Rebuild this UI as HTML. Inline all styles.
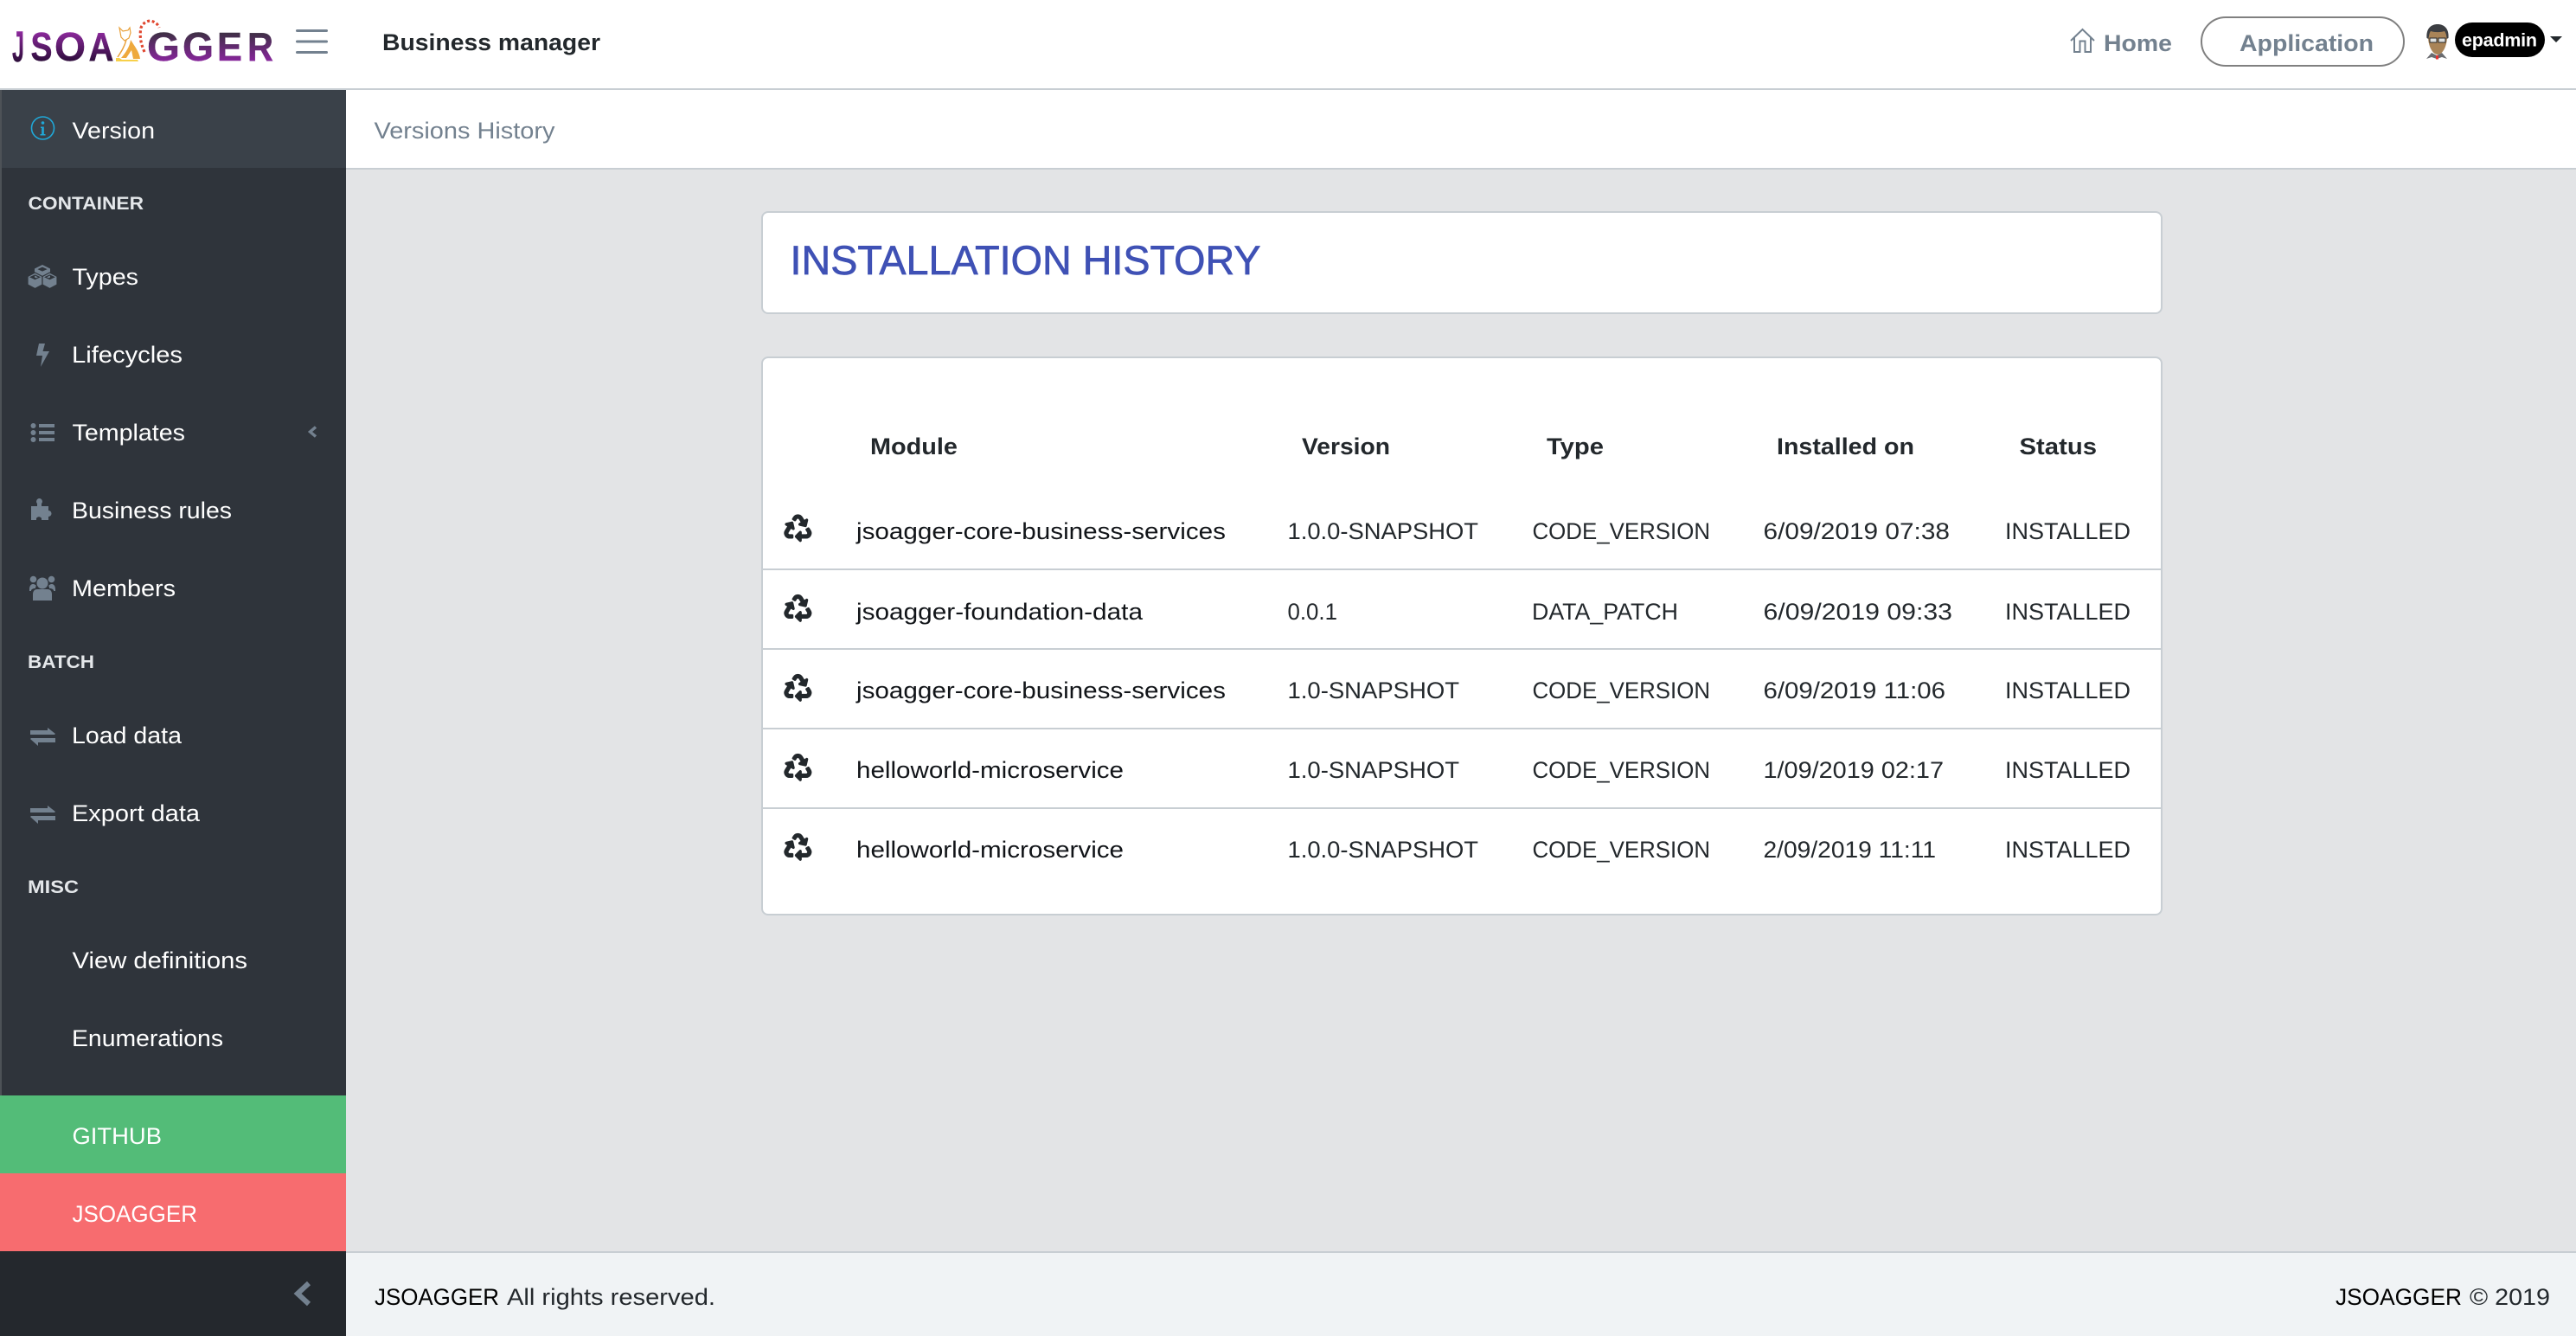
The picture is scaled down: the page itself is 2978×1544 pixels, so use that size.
<!DOCTYPE html>
<html lang="en">
<head>
<meta charset="utf-8">
<title>Business manager</title>
<style>
html,body{margin:0;padding:0;background:#e3e4e6;width:2978px;height:1544px;overflow:hidden}
svg{display:block}
text{font-family:"Liberation Sans",sans-serif;font-size:27px;white-space:pre}
.m{fill:#fff}
.s{fill:#e4e7ea;font-size:21px;font-weight:700}
.h{fill:#23282c;font-weight:700}
.t{fill:#23282c}
.b{fill:#111418}
.i{fill:#73818f}
.l{font-size:46px;font-weight:700;stroke-width:.4px}
</style>
</head>
<body>
<svg xmlns="http://www.w3.org/2000/svg" width="2978" height="1544" viewBox="0 0 2978 1544">
<defs>
<linearGradient id="g1" gradientUnits="userSpaceOnUse" x1="0" y1="36" x2="0" y2="72"><stop offset="0" stop-color="#8f2a9f"/><stop offset="1" stop-color="#2a0c38"/></linearGradient>
<linearGradient id="g2" gradientUnits="userSpaceOnUse" x1="0" y1="36" x2="0" y2="72"><stop offset="0" stop-color="#3a3040"/><stop offset="1" stop-color="#8a259f"/></linearGradient>
<path id="rc" stroke="#23282c" stroke-width="22" stroke-linejoin="round" d="M184.561 261.903c3.232 13.997-12.123 24.635-24.068 17.168l-40.736-25.455-50.867 81.402C55.606 356.273 70.96 384 96.012 384H148c6.627 0 12 5.373 12 12v40c0 6.627-5.373 12-12 12H96.115c-75.334 0-121.302-83.048-81.408-146.88l50.822-81.388-40.725-25.448c-12.081-7.547-8.966-25.961 4.879-29.158l110.237-25.45c8.611-1.988 17.201 3.381 19.189 11.99l25.452 110.237zm98.561-182.915l41.289 66.076-40.74 25.457c-12.051 7.528-9 25.953 4.879 29.158l110.237 25.45c8.672 1.999 17.215-3.438 19.189-11.99l25.45-110.237c3.197-13.844-11.99-24.719-24.068-17.168l-40.687 25.424-41.263-66.082c-37.521-60.033-125.209-60.171-162.816 0l-17.963 28.766c-3.51 5.62-1.8 13.021 3.82 16.533l33.919 21.195c5.62 3.512 13.024 1.803 16.536-3.817l17.961-28.743c12.712-20.341 41.973-19.676 54.257-.022zM497.288 301.12l-27.515-44.065c-3.511-5.623-10.916-7.334-16.538-3.821l-33.861 21.159c-5.62 3.512-7.33 10.915-3.818 16.536l27.564 44.112c13.257 21.211-2.057 48.96-27.136 48.96H320V336.02c0-14.213-17.242-21.383-27.313-11.313l-80 79.981c-6.249 6.248-6.249 16.379 0 22.627l80 79.989C302.689 517.308 320 510.3 320 495.989V448h95.88c75.274 0 121.335-82.997 81.408-146.88z"/>
<path id="ex" d="M35 844h20v-3l9 7-1 1H35zM64 853H44H36l-1 1 9 8v-4h20z"/>
</defs>

<!-- backgrounds -->
<rect width="2978" height="1544" fill="#e3e4e6"/>
<rect width="2978" height="102" fill="#fff"/>
<rect y="102" width="2978" height="2" fill="#c8ced3"/>
<rect x="400" y="104" width="2578" height="90" fill="#fff"/>
<rect x="400" y="194" width="2578" height="2" fill="#c8ced3"/>

<!-- logo -->
<g fill="url(#g1)" stroke="url(#g1)">
<text class="l" x="14" y="71" textLength="14" lengthAdjust="spacingAndGlyphs" style="font-size:50px">J</text>
<text class="l" x="35.500" y="70" textLength="25" lengthAdjust="spacingAndGlyphs">S</text>
<text class="l" x="63" y="70" textLength="36" lengthAdjust="spacingAndGlyphs">O</text>
<text class="l" x="102.500" y="70" textLength="29" lengthAdjust="spacingAndGlyphs">A</text>
</g>
<g fill="url(#g2)" stroke="url(#g2)">
<text class="l" x="170" y="70" textLength="38" lengthAdjust="spacingAndGlyphs">G</text>
<text class="l" x="211" y="70" textLength="36" lengthAdjust="spacingAndGlyphs">G</text>
<text class="l" x="251" y="70" textLength="29" lengthAdjust="spacingAndGlyphs">E</text>
<text class="l" x="286" y="70" textLength="30" lengthAdjust="spacingAndGlyphs">R</text>
</g>
<path d="M138 32l4 4 6-1 2-3 1 6-2 6-5 3-4-4z" fill="none" stroke="#e9a13b" stroke-width="1.200"/>
<path d="M146 46c-2 8-6 14-10 20" fill="none" stroke="#e9a13b" stroke-width="1.500"/>
<path d="M151 46c5 8 10 14 11 22h-8l-2-10-6 9h-6c5-6 10-13 11-21z" fill="#eea93d"/>
<path d="M134 67l4 0 3 2h18l1 2h-26z" fill="#f7d04a"/>
<path d="M167 60c-4-9-6-18-4-28 3-7 10-10 16-6 2 1 4 3 5 6" fill="none" stroke="#e0472f" stroke-width="3.200" stroke-dasharray="3 2.600"/>

<!-- hamburger -->
<g fill="#73818f">
<rect x="342" y="34" width="37" height="3" rx="1.500"/>
<rect x="342" y="46.500" width="37" height="3" rx="1.500"/>
<rect x="342" y="59" width="37" height="3" rx="1.500"/>
</g>
<text class="h" x="442" y="58" textLength="252" lengthAdjust="spacingAndGlyphs">Business manager</text>

<!-- header right -->
<path d="M2394 47l13.500-13 13.500 13M2398 43v17h6.500V47.500h6V60h6.500V43" fill="none" stroke="#73818f" stroke-width="2"/>
<text class="i" x="2432" y="59" style="font-weight:700" textLength="79" lengthAdjust="spacingAndGlyphs">Home</text>
<rect x="2545" y="20" width="234" height="56" rx="28" fill="#fff" stroke="#808080" stroke-width="2"/>
<text class="i" x="2589" y="59" style="font-weight:700" textLength="155" lengthAdjust="spacingAndGlyphs">Application</text>

<!-- avatar -->
<path d="M2805 68l6-7 6 3 6-3 6 7-6-2-6 2-6-2z" fill="#6a6c70"/>
<rect x="2816" y="64" width="3" height="4.500" fill="#e8322f"/>
<path d="M2807 42c0-8 4-12 11-12s11 4 11 12c0 11-5 21-11 21s-11-10-11-21z" fill="#a98458"/>
<path d="M2805.500 44c-1-11 5-16 12.500-16s13.500 5 12.500 16l-2 1c0-4-1-7-2.500-9-5 1.500-11 1.500-16 0-1.500 2-2 5-2.500 9z" fill="#3c3e42"/>
<rect x="2809" y="44" width="8" height="5" fill="#dfe2e2" stroke="#2a2a2a" stroke-width="1"/>
<rect x="2819" y="44" width="8" height="5" fill="#dfe2e2" stroke="#2a2a2a" stroke-width="1"/>

<!-- user pill -->
<rect x="2838" y="26" width="104" height="40" rx="20" fill="#000"/>
<text x="2846" y="53.500" fill="#fff" style="font-size:21.500px;font-weight:700" textLength="87" lengthAdjust="spacing">epadmin</text>
<path d="M2948 42h14l-7 7z" fill="#23282c"/>

<!-- breadcrumb -->
<text class="i" x="432.500" y="160" textLength="209" lengthAdjust="spacingAndGlyphs">Versions History</text>

<!-- sidebar -->
<rect y="104" width="400" height="1162" fill="#2f343b"/>
<rect y="104" width="400" height="90" fill="#3a4149"/>
<rect y="104" width="2" height="1162" fill="#4d5257"/>
<rect y="1266" width="400" height="90" fill="#53bc78"/>
<rect y="1356" width="400" height="90" fill="#f76c6f"/>
<rect y="1446" width="400" height="98" fill="#24282d"/>

<!-- footer -->
<rect x="400" y="1446" width="2578" height="2" fill="#c8ced3"/>
<rect x="400" y="1448" width="2578" height="96" fill="#f0f3f5"/>
<text x="433" y="1508" fill="#000" textLength="144" lengthAdjust="spacingAndGlyphs">JSOAGGER</text>
<text class="t" x="586" y="1508" textLength="241" lengthAdjust="spacingAndGlyphs">All rights reserved.</text>
<text x="2700" y="1508" fill="#000" textLength="146" lengthAdjust="spacingAndGlyphs">JSOAGGER</text>
<text class="t" x="2855" y="1508" textLength="93" lengthAdjust="spacingAndGlyphs">© 2019</text>

<!-- sidebar text -->
<text class="m" x="83.500" y="160" textLength="95.500" lengthAdjust="spacingAndGlyphs">Version</text>
<text class="s" x="32.500" y="242" textLength="133.500" lengthAdjust="spacingAndGlyphs">CONTAINER</text>
<text class="m" x="83.500" y="329" textLength="76.500" lengthAdjust="spacingAndGlyphs">Types</text>
<text class="m" x="83" y="419" textLength="128" lengthAdjust="spacingAndGlyphs">Lifecycles</text>
<text class="m" x="83.500" y="509" textLength="130.500" lengthAdjust="spacingAndGlyphs">Templates</text>
<text class="m" x="83" y="599" textLength="185" lengthAdjust="spacingAndGlyphs">Business rules</text>
<text class="m" x="83" y="689" textLength="120" lengthAdjust="spacingAndGlyphs">Members</text>
<text class="s" x="32" y="772" textLength="77" lengthAdjust="spacingAndGlyphs">BATCH</text>
<text class="m" x="83" y="859" textLength="127" lengthAdjust="spacingAndGlyphs">Load data</text>
<text class="m" x="83" y="949" textLength="148" lengthAdjust="spacingAndGlyphs">Export data</text>
<text class="s" x="32" y="1032" textLength="59" lengthAdjust="spacingAndGlyphs">MISC</text>
<text class="m" x="83.500" y="1119" textLength="202.500" lengthAdjust="spacingAndGlyphs">View definitions</text>
<text class="m" x="83" y="1209" textLength="175" lengthAdjust="spacingAndGlyphs">Enumerations</text>
<text class="m" x="83.500" y="1322" textLength="103.500" lengthAdjust="spacingAndGlyphs">GITHUB</text>
<text class="m" x="83.500" y="1412" textLength="144.500" lengthAdjust="spacingAndGlyphs">JSOAGGER</text>

<!-- sidebar icons -->
<circle cx="49.500" cy="148" r="13" fill="none" stroke="#20a8d8" stroke-width="1.600"/>
<g fill="#20a8d8"><circle cx="49.500" cy="142" r="1.800"/><path d="M47 146.500h3.800v8.500h1.700v1.500h-6V155h1.700v-7H47z"/></g>
<g fill="#73818f">
<!-- cubes -->
<path d="M49 306l9 4.500v10L49 325l-9-4.500v-10zM49 308.600l-5.600 2.500 5.600 2.500 5.600-2.500z"/>
<path d="M40.500 315l8.500 4.500v9.500l-8.500 4.500L32 329v-9.500zM40.500 318l-5 2.300 5 2.300 5-2.300z" stroke="#2f343b" stroke-width="1.200"/>
<path d="M57.500 315l8.500 4.500v9.500l-8.500 4.500L49 329v-9.500zM57.500 318l-5 2.300 5 2.300 5-2.300z" stroke="#2f343b" stroke-width="1.200"/>
<!-- bolt -->
<path d="M45 397h7l-2.500 9H57l-10 18 2-13h-7z"/>
<!-- list -->
<circle cx="38.500" cy="492" r="3"/><circle cx="38.500" cy="500" r="3"/><circle cx="38.500" cy="508" r="3"/>
<rect x="45" y="490" width="18" height="4"/><rect x="45" y="498" width="18" height="4"/><rect x="45" y="506" width="18" height="4"/>
<!-- puzzle -->
<path d="M36 585h7v-3a3.500 3.500 0 1 1 5 0v3h8v5a3.500 3.500 0 1 1 0 7v4h-8v-2a3.500 3.500 0 0 0-6 0v2h-6z"/>
<!-- users -->
<circle cx="49" cy="674" r="6.500"/>
<circle cx="38.500" cy="669.500" r="3.800"/><circle cx="59.500" cy="669.500" r="3.800"/>
<path d="M38 694v-7c0-4 2-6 5-6h12c3 0 5 2 5 6v7z"/>
<path d="M34 681c0-4 2-6 4-6 2 0 3 1 4 2-1 1-1 2-1 3-3 0-4 1-5 2v1l-2 0zM64 681c0-4-2-6-4-6-2 0-3 1-4 2 1 1 1 2 1 3 3 0 4 1 5 2v1l2 0z"/>
<!-- exchange -->
<use href="#ex"/>
<use href="#ex" y="90"/>
</g>
<polyline points="365,493.500 358.500,499 365,504.500" fill="none" stroke="#73818f" stroke-width="3.400"/>
<polyline points="357,1483 344,1495 357,1507" fill="none" stroke="#73818f" stroke-width="6"/>

<!-- title card -->
<rect x="881" y="245" width="1618" height="117" rx="7" fill="#fff" stroke="#c8ced3" stroke-width="2"/>
<text x="913.500" y="317" fill="#3f51b5" stroke="#3f51b5" stroke-width=".7" style="font-size:47px" textLength="544" lengthAdjust="spacingAndGlyphs">INSTALLATION HISTORY</text>

<!-- table card -->
<rect x="881" y="413" width="1618" height="644" rx="7" fill="#fff" stroke="#c8ced3" stroke-width="2"/>
<text class="h" x="1006" y="525" textLength="101" lengthAdjust="spacingAndGlyphs">Module</text>
<text class="h" x="1505" y="525" textLength="102" lengthAdjust="spacingAndGlyphs">Version</text>
<text class="h" x="1788" y="525" textLength="66" lengthAdjust="spacingAndGlyphs">Type</text>
<text class="h" x="2054" y="525" textLength="159" lengthAdjust="spacingAndGlyphs">Installed on</text>
<text class="h" x="2334.500" y="525" textLength="89.500" lengthAdjust="spacingAndGlyphs">Status</text>

<rect x="882" y="657" width="1616" height="2" fill="#c8ced3"/>
<rect x="882" y="749" width="1616" height="2" fill="#c8ced3"/>
<rect x="882" y="841" width="1616" height="2" fill="#c8ced3"/>
<rect x="882" y="933" width="1616" height="2" fill="#c8ced3"/>

<g fill="#23282c">
<use href="#rc" transform="translate(907 595) scale(.06)"/>
<use href="#rc" transform="translate(907 687.500) scale(.06)"/>
<use href="#rc" transform="translate(907 779.500) scale(.06)"/>
<use href="#rc" transform="translate(907 871.500) scale(.06)"/>
<use href="#rc" transform="translate(907 963.500) scale(.06)"/>
</g>

<!-- row 1 -->
<text class="b" x="990" y="623" textLength="427" lengthAdjust="spacingAndGlyphs">jsoagger-core-business-services</text>
<text class="t" x="1488.500" y="623" textLength="220.500" lengthAdjust="spacingAndGlyphs">1.0.0-SNAPSHOT</text>
<text class="t" x="1771.500" y="623" textLength="205.500" lengthAdjust="spacingAndGlyphs">CODE_VERSION</text>
<text class="t" x="2038.500" y="623" textLength="215.500" lengthAdjust="spacingAndGlyphs">6/09/2019 07:38</text>
<text class="t" x="2318" y="623" textLength="145" lengthAdjust="spacingAndGlyphs">INSTALLED</text>
<!-- row 2 -->
<text class="b" x="990" y="716" textLength="331" lengthAdjust="spacingAndGlyphs">jsoagger-foundation-data</text>
<text class="t" x="1488.500" y="716" textLength="57.500" lengthAdjust="spacingAndGlyphs">0.0.1</text>
<text class="t" x="1771" y="716" textLength="169" lengthAdjust="spacingAndGlyphs">DATA_PATCH</text>
<text class="t" x="2038.500" y="716" textLength="218.500" lengthAdjust="spacingAndGlyphs">6/09/2019 09:33</text>
<text class="t" x="2318" y="716" textLength="145" lengthAdjust="spacingAndGlyphs">INSTALLED</text>
<!-- row 3 -->
<text class="b" x="990" y="807" textLength="427" lengthAdjust="spacingAndGlyphs">jsoagger-core-business-services</text>
<text class="t" x="1488.500" y="807" textLength="198.500" lengthAdjust="spacingAndGlyphs">1.0-SNAPSHOT</text>
<text class="t" x="1771.500" y="807" textLength="205.500" lengthAdjust="spacingAndGlyphs">CODE_VERSION</text>
<text class="t" x="2038.500" y="807" textLength="210.500" lengthAdjust="spacingAndGlyphs">6/09/2019 11:06</text>
<text class="t" x="2318" y="807" textLength="145" lengthAdjust="spacingAndGlyphs">INSTALLED</text>
<!-- row 4 -->
<text class="b" x="990" y="899" textLength="309" lengthAdjust="spacingAndGlyphs">helloworld-microservice</text>
<text class="t" x="1488.500" y="899" textLength="198.500" lengthAdjust="spacingAndGlyphs">1.0-SNAPSHOT</text>
<text class="t" x="1771.500" y="899" textLength="205.500" lengthAdjust="spacingAndGlyphs">CODE_VERSION</text>
<text class="t" x="2038.500" y="899" textLength="208.500" lengthAdjust="spacingAndGlyphs">1/09/2019 02:17</text>
<text class="t" x="2318" y="899" textLength="145" lengthAdjust="spacingAndGlyphs">INSTALLED</text>
<!-- row 5 -->
<text class="b" x="990" y="991" textLength="309" lengthAdjust="spacingAndGlyphs">helloworld-microservice</text>
<text class="t" x="1488.500" y="991" textLength="220.500" lengthAdjust="spacingAndGlyphs">1.0.0-SNAPSHOT</text>
<text class="t" x="1771.500" y="991" textLength="205.500" lengthAdjust="spacingAndGlyphs">CODE_VERSION</text>
<text class="t" x="2038.500" y="991" textLength="199.500" lengthAdjust="spacingAndGlyphs">2/09/2019 11:11</text>
<text class="t" x="2318" y="991" textLength="145" lengthAdjust="spacingAndGlyphs">INSTALLED</text>
</svg>
</body>
</html>
